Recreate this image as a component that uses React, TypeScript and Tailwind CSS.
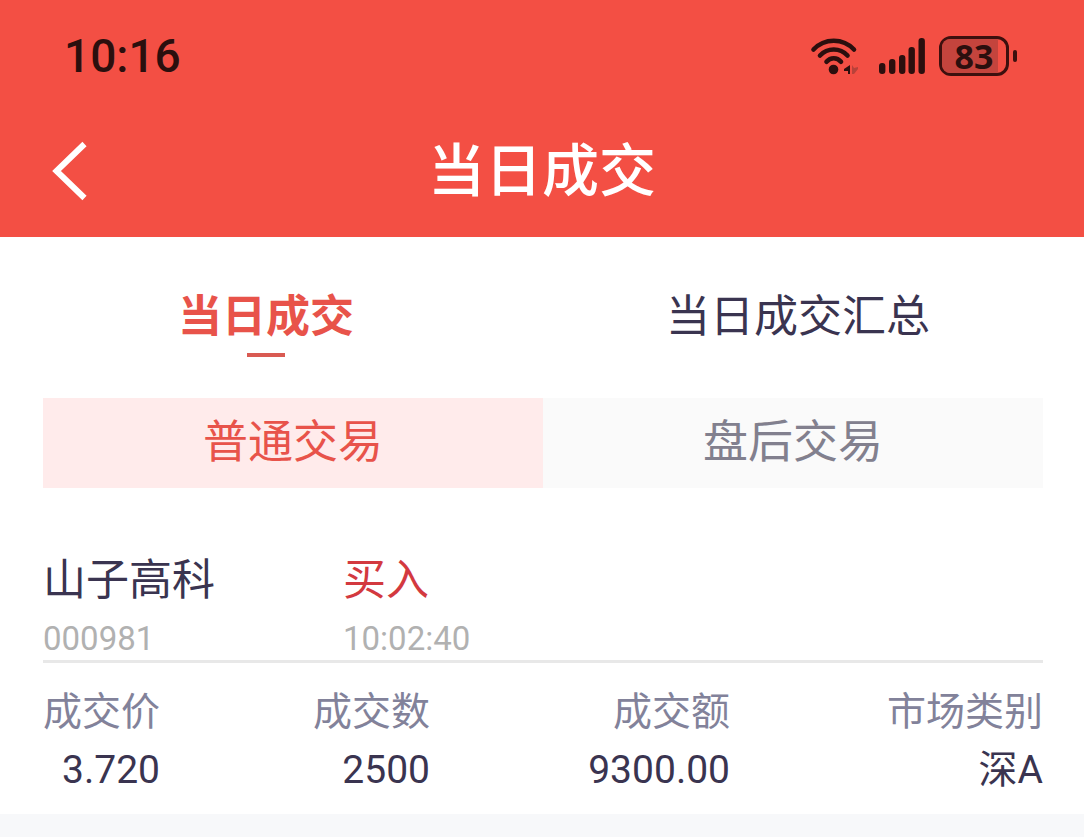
interface Trade {
    name: string;
    code: string;
    side: string;
    time: string;
    price: string;
    quantity: string;
    amount: string;
    market: string;
}

const trades: Trade[] = [
    {
        name: '山子高科',
        code: '000981',
        side: '买入',
        time: '10:02:40',
        price: '3.720',
        quantity: '2500',
        amount: '9300.00',
        market: '深A',
    },
];

function WifiIcon() {
    return (
        <svg width="50" height="40" viewBox="0 0 50 40" fill="none" aria-hidden="true">
            <g stroke="#2b0f0e" strokeWidth="4.6" strokeLinecap="round">
                <path d="M4.500 13.500C15.500 1.800 34 1.800 45 13.500" />
                <path d="M11 19.500C18.500 11.500 31 11.500 38.500 19.500" />
                <path d="M17.500 25.800C21.500 21 28 21 32 25.800" />
            </g>
            <circle cx="24.500" cy="33.500" r="4.800" fill="#2b0f0e" />
            <path d="M41 29v9h-2v-3h-4v-2z" fill="#2b0f0e" />
            <path d="M43 29l2 3 4-1v2l-4 5h-2z" fill="#b8423a" />
        </svg>
    );
}

function SignalIcon() {
    return (
        <svg width="46" height="38" viewBox="0 0 46 38" fill="#2b0f0e" aria-hidden="true">
            <rect x="0" y="26" width="6.400" height="11" rx="3" />
            <rect x="10" y="22" width="6.400" height="15" rx="3" />
            <rect x="20" y="18" width="6.400" height="19" rx="3" />
            <rect x="29.500" y="10" width="6.400" height="27" rx="3" />
            <rect x="39.500" y="1" width="6.400" height="36" rx="3" />
        </svg>
    );
}

function Battery({ level }: { level: number }) {
    return (
        <div className="ml-[14px] flex items-center gap-1">
            <div className="relative flex h-10 w-[70px] items-center justify-center rounded-xl border-3 border-[#3d100e]">
                <div className="absolute inset-y-0 left-0 rounded-l-lg bg-[#c4443d]" style={{ width: `${level + 4}%` }} />
                <span className="relative font-['Open_Sans','Noto_Sans_CJK_SC',sans-serif] text-[34px] leading-[48px] font-bold">
                    {level}
                </span>
            </div>
            <div className="h-3 w-1 rounded-full bg-[#3d100e]" />
        </div>
    );
}

function TradeCard({ trade }: { trade: Trade }) {
    return (
        <article>
            <div className="grid grid-cols-[30%_70%] border-b-3 border-[#e8e8e8]">
                <div>
                    <h2 className="text-[43px] leading-[60px]">{trade.name}</h2>
                    <p className="pt-2 text-[33px] leading-[42px] text-[#b1b1b1]">{trade.code}</p>
                </div>
                <div>
                    <p className="text-[43px] leading-[60px] text-[#d3393f]">{trade.side}</p>
                    <p className="pt-2 text-[33px] leading-[42px] text-[#b1b1b1]">{trade.time}</p>
                </div>
            </div>
            <table className="mt-5 w-full table-fixed text-right text-[39px] leading-[58px] whitespace-nowrap">
                <thead>
                    <tr className="text-[#82829a]">
                        <th className="w-[117px] font-normal">成交价</th>
                        <th className="w-[27%] font-normal">成交数</th>
                        <th className="w-[30%] font-normal">成交额</th>
                        <th className="font-normal">市场类别</th>
                    </tr>
                </thead>
                <tbody>
                    <tr>
                        <td>{trade.price}</td>
                        <td>{trade.quantity}</td>
                        <td>{trade.amount}</td>
                        <td>{trade.market}</td>
                    </tr>
                </tbody>
            </table>
        </article>
    );
}

export default function App() {
    return (
        <div className="min-h-screen bg-[#f7f8fa] font-['Roboto','Noto_Sans_CJK_SC',sans-serif] text-[#3a3450]">
            <header className="bg-[#f34f44]">
                <div className="flex h-28 items-center justify-between pr-[67px] pl-16 text-[#2b0f0e]">
                    <time className="text-[46px] leading-none font-medium">10:16</time>
                    <div className="flex items-center">
                        <WifiIcon />
                        <div className="ml-5">
                            <SignalIcon />
                        </div>
                        <Battery level={83} />
                    </div>
                </div>
                <div className="grid h-[125px] grid-cols-[1fr_auto_1fr] items-start text-white">
                    <button type="button" aria-label="返回" className="mt-7 ml-12 w-12">
                        <svg width="44" height="62" viewBox="0 0 44 62" fill="none" aria-hidden="true">
                            <path d="M36.500 4L8.500 31L36.500 58" stroke="currentColor" strokeWidth="6" />
                        </svg>
                    </button>
                    <h1 className="mt-[18px] text-[57px] leading-[84px] font-medium">当日成交</h1>
                </div>
            </header>

            <main className="bg-white pb-[15px]">
                <nav className="grid grid-cols-2 pt-12 pr-5 text-[44px] leading-[64px]">
                    <button type="button" className="flex flex-col items-center font-bold text-[#e8534a]">
                        当日成交
                        <span className="mt-1 h-1 w-[38px] bg-[#d95a52]" />
                    </button>
                    <button type="button" className="flex flex-col items-center">
                        当日成交汇总
                    </button>
                </nav>

                <div className="pr-[41px] pl-[43px]">
                    <div className="mt-[41px] mb-[62px] grid grid-cols-2 text-[45px] leading-[90px]">
                        <button type="button" className="bg-[#ffebeb] text-[#e8534a]">
                            普通交易
                        </button>
                        <button type="button" className="bg-[#fafafa] text-[#82808e]">
                            盘后交易
                        </button>
                    </div>
                    {trades.map((trade) => (
                        <TradeCard key={trade.code} trade={trade} />
                    ))}
                </div>
            </main>
        </div>
    );
}
